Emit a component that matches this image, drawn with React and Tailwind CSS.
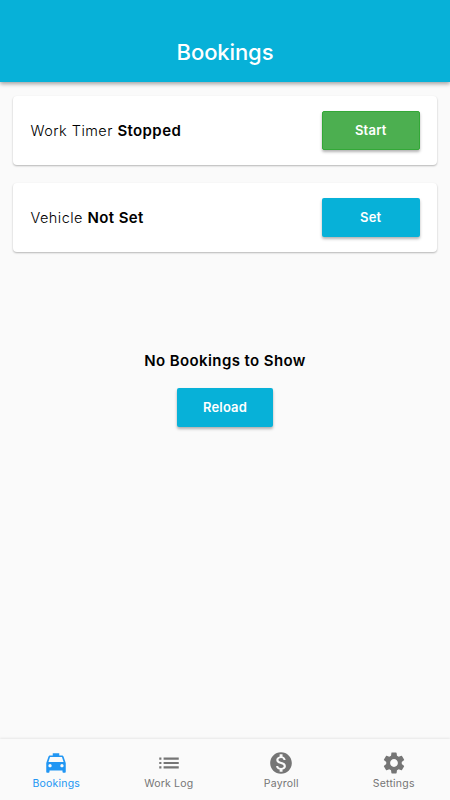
import clsx from 'clsx';
import { MdList, MdLocalTaxi, MdMonetizationOn, MdSettings } from 'react-icons/md';

const tabs = [
  { label: 'Bookings', icon: MdLocalTaxi, active: true },
  { label: 'Work Log', icon: MdList },
  { label: 'Payroll', icon: MdMonetizationOn },
  { label: 'Settings', icon: MdSettings },
];

function Button({ className, children }) {
  return (
    <button
      className={clsx(
        'h-[39px] rounded-[2px] text-[13px] font-semibold tracking-[0.2px] text-white shadow-[0_2px_3px_rgba(0,0,0,0.3)]',
        className
      )}
    >
      {children}
    </button>
  );
}

function StatusCard({ label, value, children }) {
  return (
    <div className="flex h-[69px] items-center justify-between rounded-[4px] bg-white px-[17.5px] shadow-[0_1px_2px_rgba(0,0,0,0.28)]">
      <p className="pt-0.5 text-[14.5px] font-light tracking-[0.45px] text-black">
        {label} <span className="text-[15px] font-semibold tracking-[0.4px]">{value}</span>
      </p>
      {children}
    </div>
  );
}

export default function App() {
  return (
    <div className="flex h-[800px] w-[450px] flex-col bg-[#fafafa] font-['Inter',sans-serif]">
      <header className="z-10 flex h-[82px] shrink-0 items-end justify-center bg-[#07b1d8] pb-[14px] shadow-[0_2px_4px_rgba(0,0,0,0.35)]">
        <h1 className="text-[22px] leading-8 font-medium tracking-[-0.1px] text-white">Bookings</h1>
      </header>

      <main className="flex flex-1 flex-col px-[13px] pt-[14px]">
        <div className="flex flex-col gap-[18px]">
          <StatusCard label="Work Timer" value="Stopped">
            <Button className="w-[97.5px] border border-[#33a837] bg-[#4caf50]">Start</Button>
          </StatusCard>
          <StatusCard label="Vehicle" value="Not Set">
            <Button className="w-[97.5px] bg-[#07b1d8]">Set</Button>
          </StatusCard>
        </div>

        <div className="mt-[99px] flex flex-col items-center gap-[17px]">
          <p className="text-[15px] leading-5 font-semibold tracking-[0.4px] text-black">No Bookings to Show</p>
          <Button className="w-[95.5px] bg-[#07b1d8]">Reload</Button>
        </div>
      </main>

      <nav className="grid h-[61px] shrink-0 grid-cols-4 bg-[#fafafa] shadow-[0_-1px_2px_rgba(0,0,0,0.08)]">
        {tabs.map(({ label, icon: Icon, active }) => (
          <div
            key={label}
            className={clsx('flex flex-col items-center pt-[11px]', active ? 'text-[#2196f3]' : 'text-[#757575]')}
          >
            <Icon size={26} />
            <span className="text-[10.5px] leading-4 tracking-[0.2px]">{label}</span>
          </div>
        ))}
      </nav>
    </div>
  );
}
